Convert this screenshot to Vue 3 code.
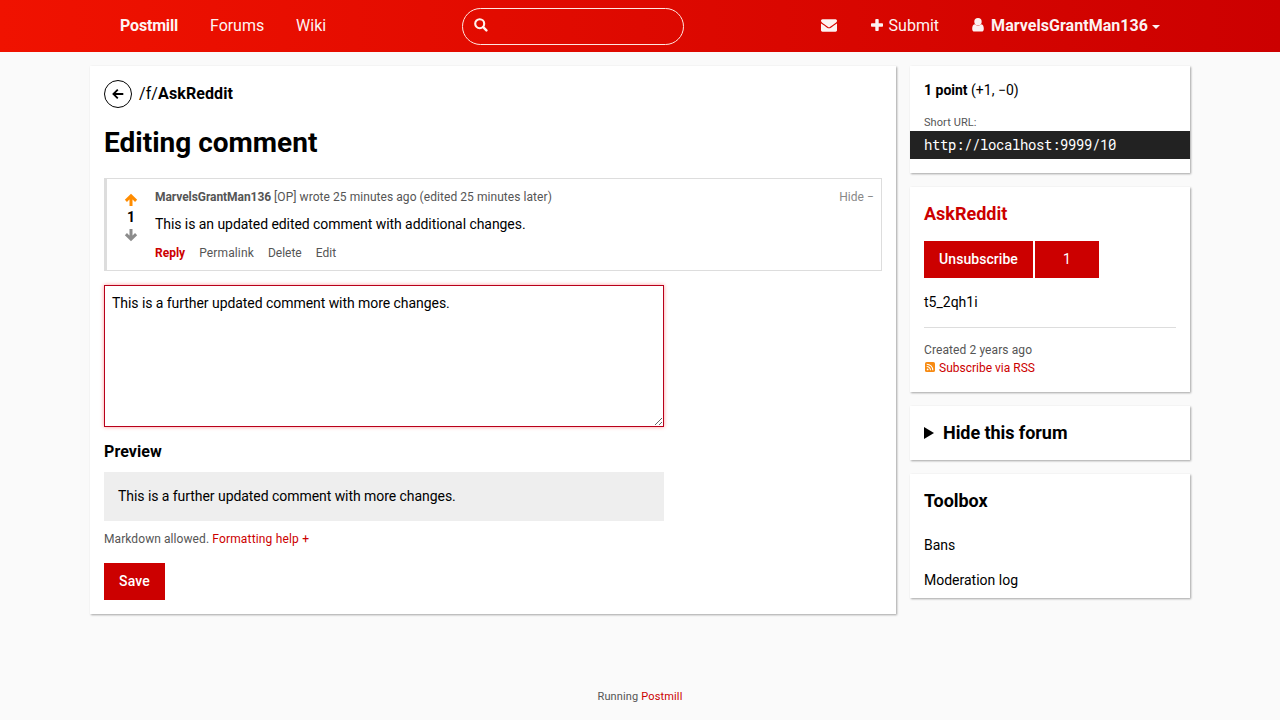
<script setup>
import { ref } from 'vue'

const body = ref('This is a further updated comment with more changes.')
</script>

<template>
  <div class="page">
    <nav class="bar">
      <div class="bar-inner">
        <div class="nav-left">
          <a class="bold brand">Postmill</a>
          <a class="forums">Forums</a>
          <a>Wiki</a>
        </div>
        <form class="search">
          <svg width="14" height="14" viewBox="0 0 14 14">
            <circle cx="5.7" cy="5.7" r="4.5" fill="none" stroke="currentColor" stroke-width="2.1" />
            <path d="M9.2 9.2 12.4 12.4" stroke="currentColor" stroke-width="2.4" stroke-linecap="round" />
          </svg>
        </form>
        <div class="nav-right">
          <a class="mail">
            <svg width="16" height="13" viewBox="0 0 1792 1408">
              <path fill="currentColor" d="M1792 454v794q0 66-47 113t-113 47H160q-66 0-113-47T0 1248V454q44 49 101 87 362 246 497 345 57 42 92.500 65.500t94.500 48T895 1024h2q51 0 110-24.500t94.500-48T1194 886q170-123 498-345 57-39 100-87zm0-294q0 79-49 151t-122 123q-376 261-468 325-10 7-42.500 30.500t-54 38-52 32.500-57.500 27-50 9h-2q-23 0-50-9t-57.500-27-52-32.500-54-38T639 759Q548 695 377 576.500T172 434q-62-42-117-115.500T0 182q0-78 41.500-130T160 0h1472q65 0 112.500 47t47.500 113z" />
            </svg>
          </a>
          <a class="submit">
            <svg width="12" height="12" viewBox="0 0 12 12">
              <path fill="currentColor" d="M4.300 .8Q4.300 0 5.100 0H6.900Q7.700 0 7.700.8V4.300H11.200Q12 4.300 12 5.100V6.900Q12 7.700 11.200 7.700H7.700V11.200Q7.700 12 6.900 12H5.100Q4.300 12 4.300 11.200V7.700H.8Q0 7.700 0 6.900V5.100Q0 4.300.8 4.300H4.300Z" />
            </svg>
            <span>Submit</span>
          </a>
          <a class="user bold">
            <svg width="12" height="14" viewBox="0 0 12 14">
              <circle cx="6" cy="3.800" r="3.700" fill="currentColor" />
              <path fill="currentColor" d="M2.700 6.300C.8 6.700.2 8.500.2 11 .2 12.700 1.100 13.600 2.500 13.600H9.500C10.900 13.600 11.800 12.700 11.800 11 11.800 8.500 11.200 6.700 9.300 6.300 7.400 8.100 4.600 8.100 2.700 6.300Z" />
            </svg>
            <span>MarvelsGrantMan136</span>
            <i class="caret"></i>
          </a>
        </div>
      </div>
    </nav>

    <div class="columns">
      <main class="card main">
        <div class="crumb">
          <a class="back">
            <svg width="12" height="12" viewBox="0 0 12 12" fill="none" stroke="currentColor" stroke-width="1.800">
              <path d="M11.300 6H1.600M5.800 1.600 1.400 6 5.800 10.400" />
            </svg>
          </a>
          <span>/f/<b>AskReddit</b></span>
        </div>
        <h1>Editing comment</h1>

        <article class="comment">
          <div class="vote">
            <svg class="up" width="14" height="14" viewBox="0 0 14 14" fill="none" stroke="currentColor" stroke-width="3">
              <path d="M7 13V2.800M1.900 7.900 7 2.800 12.100 7.900" />
            </svg>
            <b>1</b>
            <svg class="down" width="14" height="14" viewBox="0 0 14 14" fill="none" stroke="currentColor" stroke-width="3">
              <path d="M7 1V11.200M1.900 6.100 7 11.200 12.100 6.100" />
            </svg>
          </div>
          <div class="comment-main">
            <div class="comment-head">
              <span><b>MarvelsGrantMan136</b> [OP] wrote 25 minutes ago (edited 25 minutes later)</span>
              <a class="hide">Hide −</a>
            </div>
            <p>This is an updated edited comment with additional changes.</p>
            <div class="links">
              <a class="reply">Reply</a>
              <a class="permalink">Permalink</a>
              <a>Delete</a>
              <a>Edit</a>
            </div>
          </div>
        </article>

        <textarea v-model="body" spellcheck="false"></textarea>
        <h3>Preview</h3>
        <div class="preview">{{ body }}</div>
        <div class="help">Markdown allowed. <a>Formatting help +</a></div>
        <button class="btn save">Save</button>
      </main>

      <aside>
        <section class="card points">
          <p><b>1 point</b> (+1, −0)</p>
          <div class="label">Short URL:</div>
          <div class="url">http://localhost:9999/10</div>
        </section>

        <section class="card forum">
          <h2 class="red">AskReddit</h2>
          <div class="sub">
            <button class="btn unsub">Unsubscribe</button>
            <span class="btn count">1</span>
          </div>
          <p>t5_2qh1i</p>
          <hr />
          <div class="meta created">Created 2 years ago</div>
          <div class="meta rss">
            <svg width="10" height="10" viewBox="0 0 10 10">
              <rect width="10" height="10" rx="1.600" fill="#f78b13" />
              <circle cx="2.600" cy="7.400" r=".9" fill="#fff" />
              <path d="M1.700 4.500A3.800 3.800 0 0 1 5.500 8.300M1.700 2.200A6.100 6.100 0 0 1 7.800 8.300" fill="none" stroke="#fff" stroke-width="1.050" />
            </svg>
            <a>Subscribe via RSS</a>
          </div>
        </section>

        <section class="card hide-forum">
          <h2><i class="tri"></i>Hide this forum</h2>
        </section>

        <section class="card toolbox">
          <h2>Toolbox</h2>
          <a>Bans</a>
          <a>Moderation log</a>
        </section>
      </aside>
    </div>

    <footer>Running <a>Postmill</a></footer>
  </div>
</template>

<style>
body {
  background: #fafafa;
}
</style>

<style scoped>
.page {
  box-sizing: border-box;
  height: 720px;
  overflow: hidden;
  display: flex;
  flex-direction: column;
  font: 14px/21px Roboto, sans-serif;
  color: #000;
}
.page * {
  box-sizing: border-box;
}
h1, h2, h3, p {
  margin: 0;
}
svg {
  display: block;
  flex: none;
}
.bar {
  height: 52px;
  flex: none;
  background: linear-gradient(to right, #f01200, #c00);
  color: #fff;
  font-size: 16px;
}
.bar-inner {
  width: 1072px;
  height: 52px;
  margin: 0 auto;
  display: flex;
  align-items: center;
}
.nav-left, .nav-right {
  width: 358px;
  display: flex;
  margin-top: -2px;
}
.nav-left a, .nav-right a {
  display: flex;
  align-items: center;
  padding: 0 16px;
  opacity: .95;
}
.nav-left .brand {
  letter-spacing: -.18px;
}
.nav-left .forums {
  letter-spacing: -.04px;
}
.nav-right {
  flex: 1;
  justify-content: flex-end;
}
.nav-right .submit {
  padding: 0 17px 0 18px;
}
.submit span {
  margin-left: 6px;
}
.user span {
  margin: 0 4px 0 7px;
  letter-spacing: .04px;
}
.user svg {
  margin-top: -1px;
}
.bold {
  font-weight: 700;
}
.caret {
  border: 4px solid transparent;
  border-top-color: #fff;
  border-bottom: 0;
  margin-top: 4px;
}
.search {
  width: 222px;
  height: 37px;
  margin: 1px 0 0;
  border: 1px solid #ffe6e0;
  border-radius: 19px;
  padding: 8.500px 11px;
  color: #fff2ee;
}
.columns {
  width: 1100px;
  margin: 14px auto 0;
  display: flex;
  align-items: flex-start;
  gap: 14px;
}
.card {
  background: #fff;
  box-shadow: 1px 1px 2px rgba(0, 0, 0, .35);
  padding: 14px;
}
.main {
  width: 806px;
  height: 548px;
}
.crumb {
  display: flex;
  align-items: center;
  gap: 7px;
  height: 28px;
  font-size: 16px;
  letter-spacing: .1px;
}
.crumb span {
  margin-top: -2px;
}
.back {
  width: 28px;
  height: 28px;
  border: 1px solid #000;
  border-radius: 50%;
  display: grid;
  place-items: center;
}
h1 {
  font-size: 28px;
  line-height: 42px;
  margin: 14px 0;
}
.comment {
  display: flex;
  width: 778px;
  height: 93px;
  border: 1px solid #ddd;
  border-left-width: 3px;
}
.vote {
  width: 48px;
  padding-top: 14px;
  display: flex;
  flex-direction: column;
  align-items: center;
}
.vote b {
  line-height: 21px;
}
.up {
  color: #ff8c00;
}
.down {
  color: #8c8c8c;
}
.comment-main {
  flex: 1;
  padding: 9px 7px 0 0;
}
.comment-head {
  display: flex;
  justify-content: space-between;
  font-size: 12px;
  line-height: 18px;
  color: #555;
  letter-spacing: .06px;
}
.comment-head b {
  letter-spacing: -.06px;
}
.hide {
  color: #888;
}
.comment-main p {
  margin-top: 8px;
  letter-spacing: -.06px;
}
.links {
  display: flex;
  gap: 14px;
  margin-top: 9px;
  font-size: 12px;
  line-height: 18px;
  color: #555;
}
.links .permalink {
  letter-spacing: .14px;
}
.links .reply {
  color: #c00;
  font-weight: 700;
}
textarea {
  display: block;
  width: 560px;
  height: 142px;
  margin-top: 14px;
  border: 1px solid #b8001a;
  box-shadow: 0 0 4px rgba(255, 0, 0, .4);
  outline: 0;
  padding: 7px;
  background: #fff;
  color: #000;
  font: 14px/21px Roboto, sans-serif;
  letter-spacing: -.055px;
}
h3 {
  font-size: 16px;
  line-height: 24px;
  margin: 13px 0 8px;
  letter-spacing: .08px;
}
.preview {
  width: 560px;
  height: 49px;
  padding: 14px;
  background: #eee;
  letter-spacing: -.055px;
}
.help {
  margin: 9px 0 15px;
  font-size: 12px;
  line-height: 18px;
  color: #555;
  letter-spacing: .08px;
}
.help a {
  letter-spacing: .17px;
}
.help a, .rss a, footer a, .red {
  color: #c00;
}
.btn {
  display: inline-block;
  height: 37px;
  padding: 0 15px;
  border: 0;
  background: #c00;
  color: #fff;
  font: 500 14px/37px Roboto, sans-serif;
  text-align: center;
}
.save {
  width: 61px;
  letter-spacing: .15px;
}
.unsub {
  width: 109px;
  padding: 0;
  letter-spacing: .06px;
}
aside {
  width: 280px;
  display: flex;
  flex-direction: column;
  gap: 14px;
}
.points {
  height: 107px;
}
.label {
  padding-top: 13px;
  margin-bottom: -1px;
  font-size: 11px;
  line-height: 18px;
  color: #555;
  letter-spacing: .08px;
}
.url {
  margin: 0 -14px;
  padding: 0 14px;
  height: 28px;
  background: #222;
  color: #fff;
  font: 14px/28px "Roboto Mono", "Liberation Mono", monospace;
  letter-spacing: -.4px;
}
h2 {
  font-size: 18px;
  line-height: 26px;
}
.hide-forum h2, .toolbox h2 {
  letter-spacing: -.06px;
}
.forum {
  height: 205px;
}
.sub {
  display: flex;
  gap: 2px;
  margin: 14px 0;
}
.count {
  width: 64px;
  font-weight: 400;
}
hr {
  border: 0;
  border-top: 1px solid #ddd;
  margin: 14px 0 13px;
}
.meta {
  font-size: 12px;
  line-height: 18px;
  color: #555;
}
.created {
  letter-spacing: .1px;
}
.rss {
  display: flex;
  align-items: center;
  gap: 4px;
  padding-left: 1px;
}
.rss svg {
  margin-top: -2px;
}
.hide-forum {
  height: 54px;
}
.hide-forum h2 {
  display: flex;
  align-items: center;
}
.tri {
  border: 6px solid transparent;
  border-left: 10px solid #000;
  border-right: 0;
  margin-right: 9px;
}
.toolbox {
  height: 124px;
}
.toolbox h2 {
  margin-bottom: 14px;
}
.toolbox a {
  display: block;
  line-height: 35px;
}
footer {
  margin-top: auto;
  margin-bottom: 15px;
  text-align: center;
  font-size: 11px;
  line-height: 17px;
  color: #555;
  letter-spacing: .14px;
}
</style>
